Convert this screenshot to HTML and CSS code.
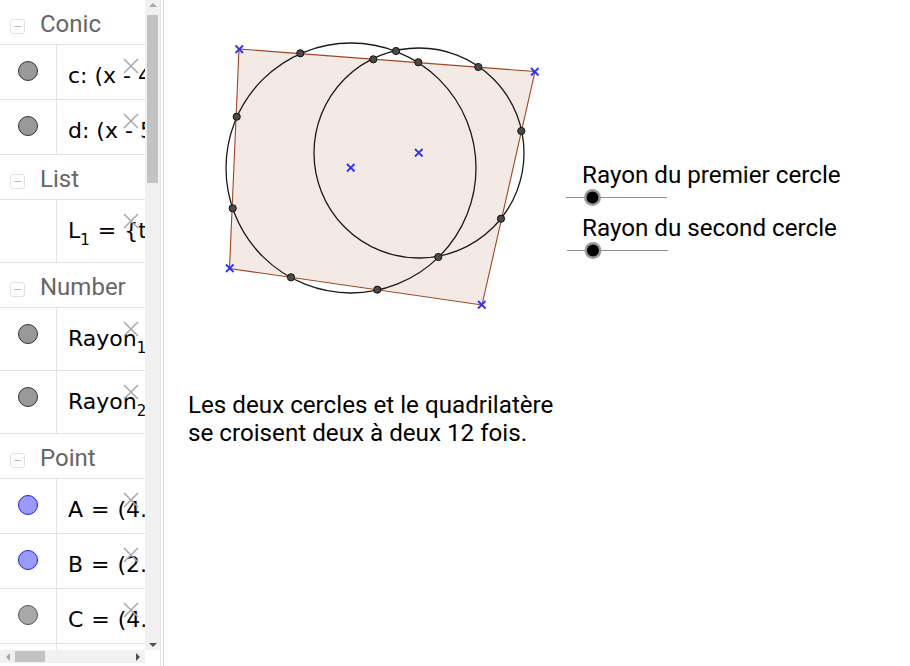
FILE: index.html
```html
<!DOCTYPE html>
<html lang="fr">
<head>
<meta charset="utf-8">
<title>Cercles et quadrilatère</title>
<link rel="stylesheet" href="styles.css">
</head>
<body>
<div class="app">
  <aside class="algebra">
    <div class="av-list">
      <div class="group-header"><span class="collapse"></span><span class="group-title">Conic</span></div>
      <div class="item">
        <div class="marker"><span class="dot gray"></span></div>
        <div class="formula">c: (x - 4.14)² + (y - 2.17)² = 6.25</div>
        <svg class="close" viewBox="0 0 16 16"><path d="M1 1L15 15M15 1L1 15"/></svg>
      </div>
      <div class="item">
        <div class="marker"><span class="dot gray"></span></div>
        <div class="formula">d: (x - 5.5)² + (y - 2.46)² = 4.41</div>
        <svg class="close" viewBox="0 0 16 16"><path d="M1 1L15 15M15 1L1 15"/></svg>
      </div>
      <div class="group-header"><span class="collapse"></span><span class="group-title">List</span></div>
      <div class="item tall">
        <div class="marker"></div>
        <div class="formula">L<sub>1</sub> <span class="op">=</span> {true, true}</div>
        <svg class="close" viewBox="0 0 16 16"><path d="M1 1L15 15M15 1L1 15"/></svg>
      </div>
      <div class="group-header"><span class="collapse"></span><span class="group-title">Number</span></div>
      <div class="item tall">
        <div class="marker"><span class="dot gray"></span></div>
        <div class="formula">Rayon<sub>1</sub> <span class="op">=</span> 2.5</div>
        <svg class="close" viewBox="0 0 16 16"><path d="M1 1L15 15M15 1L1 15"/></svg>
      </div>
      <div class="item tall">
        <div class="marker"><span class="dot gray"></span></div>
        <div class="formula">Rayon<sub>2</sub> <span class="op">=</span> 2.1</div>
        <svg class="close" viewBox="0 0 16 16"><path d="M1 1L15 15M15 1L1 15"/></svg>
      </div>
      <div class="group-header"><span class="collapse"></span><span class="group-title">Point</span></div>
      <div class="item">
        <div class="marker"><span class="dot blue"></span></div>
        <div class="formula">A <span class="op">=</span> (4.14, 2.17)</div>
        <svg class="close" viewBox="0 0 16 16"><path d="M1 1L15 15M15 1L1 15"/></svg>
      </div>
      <div class="item">
        <div class="marker"><span class="dot blue"></span></div>
        <div class="formula">B <span class="op">=</span> (2.84, 4.96)</div>
        <svg class="close" viewBox="0 0 16 16"><path d="M1 1L15 15M15 1L1 15"/></svg>
      </div>
      <div class="item">
        <div class="marker"><span class="dot light"></span></div>
        <div class="formula">C <span class="op">=</span> (4.5, 2.46)</div>
        <svg class="close" viewBox="0 0 16 16"><path d="M1 1L15 15M15 1L1 15"/></svg>
      </div>
      <div class="item">
        <div class="marker"><span class="dot light"></span></div>
        <div class="formula">D <span class="op">=</span> (8.8, 4.5)</div>
      </div>
    </div>
    <div class="vscroll">
      <span class="arrow up"></span>
      <div class="vthumb"></div>
      <div class="spacer"></div>
      <span class="arrow down"></span>
    </div>
    <div class="hscroll">
      <span class="harrow left"></span>
      <div class="hthumb"></div>
      <div class="spacer"></div>
      <span class="harrow right"></span>
    </div>
    <div class="corner"></div>
  </aside>
  <div class="divider"></div>
  <main class="graphics">
    <svg class="canvas" width="746" height="666" viewBox="164 0 746 666">
      <polygon class="quad" points="239,49 535,71.5 482,305 229.5,268.5"/>
      <circle class="conic" cx="351" cy="168" r="125"/>
      <circle class="conic" cx="419" cy="153" r="105"/>
      <g class="inter">
        <circle cx="300.3" cy="53.3" r="3.6"/>
        <circle cx="373.3" cy="59.3" r="3.6"/>
        <circle cx="396" cy="51" r="3.6"/>
        <circle cx="418.3" cy="62.3" r="3.6"/>
        <circle cx="478.3" cy="67" r="3.6"/>
        <circle cx="236.7" cy="116.7" r="3.6"/>
        <circle cx="521.3" cy="131" r="3.6"/>
        <circle cx="232.7" cy="208.3" r="3.6"/>
        <circle cx="501" cy="218.7" r="3.6"/>
        <circle cx="438.3" cy="257" r="3.6"/>
        <circle cx="291" cy="277.3" r="3.6"/>
        <circle cx="377.3" cy="289.7" r="3.6"/>
      </g>
      <g class="cross">
        <path d="M235.5 45.5l7.5 7.5M243 45.5l-7.5 7.5"/>
        <path d="M531 68l7.5 7.5M538.5 68l-7.5 7.5"/>
        <path d="M478 301l7.5 7.5M485.5 301l-7.5 7.5"/>
        <path d="M226 264.5l7.5 7.5M233.5 264.5l-7.5 7.5"/>
        <path d="M347 164l7.5 7.5M354.5 164l-7.5 7.5"/>
        <path d="M415 149l7.5 7.5M422.5 149l-7.5 7.5"/>
      </g>
      <g class="slider">
        <line x1="566" y1="197.5" x2="667" y2="197.5"/>
        <circle class="halo" cx="592.5" cy="197.5" r="8.5"/>
        <circle class="knob" cx="592.5" cy="197.5" r="6"/>
        <line x1="567" y1="250.5" x2="668" y2="250.5"/>
        <circle class="halo" cx="593" cy="250.5" r="8.5"/>
        <circle class="knob" cx="593" cy="250.5" r="6"/>
      </g>
    </svg>
    <div class="label label-1">Rayon du premier cercle</div>
    <div class="label label-2">Rayon du second cercle</div>
    <p class="caption">Les deux cercles et le quadrilatère<br>se croisent deux à deux 12 fois.</p>
  </main>
</div>
</body>
</html>
```
FILE: styles.css
```css
* { box-sizing: border-box; }

html, body {
  margin: 0;
  padding: 0;
  background: #fff;
}

body {
  width: 910px;
  height: 666px;
  overflow: hidden;
  font-family: "DejaVu Sans", sans-serif;
}

.app {
  display: flex;
  height: 666px;
}

/* ---------- Algebra view ---------- */
.algebra {
  width: 160px;
  flex: none;
  display: grid;
  grid-template-columns: 145px 15px;
  grid-template-rows: 650px 13px 3px;
}

.av-list {
  overflow: hidden;
  background: #fff;
}

.group-header {
  height: 45px;
  border-bottom: 1px solid #e3e3e3;
  display: flex;
  align-items: flex-start;
  padding: 10px 0 0 10px;
}

.collapse {
  width: 15px;
  height: 15px;
  margin-top: 9px;
  margin-right: 15px;
  border: 1px solid #e2e2e2;
  border-radius: 3px;
  display: flex;
  align-items: center;
  justify-content: center;
  flex: none;
}

.collapse::before {
  content: "";
  width: 7px;
  height: 1px;
  background: #b8b8b8;
}

.group-title {
  font-family: Roboto, sans-serif;
  font-size: 24px;
  line-height: 28px;
  color: #666;
  white-space: nowrap;
}

.item {
  position: relative;
  height: 55px;
  display: flex;
  border-bottom: 1px solid #e3e3e3;
}

.item.tall {
  height: 63px;
}

.marker {
  width: 57px;
  flex: none;
  border-right: 1px solid #e3e3e3;
  display: flex;
  justify-content: center;
  align-items: flex-start;
  padding-top: 16px;
  padding-right: 1px;
}

.dot {
  width: 20px;
  height: 20px;
  border-radius: 50%;
  border: 1px solid #333;
  background: #999;
}

.dot.blue {
  background: #9a9aff;
  border-color: #1d1dff;
}

.dot.light {
  background: #a9a9a9;
  border-color: #555;
}

.formula {
  padding: 18px 0 0 11px;
  font-family: "DejaVu Sans", sans-serif;
  font-size: 22px;
  line-height: 26px;
  color: #000;
  white-space: nowrap;
}

.formula .op {
  padding: 0 1px;
}

.formula sub {
  font-size: 15px;
  vertical-align: -7px;
  line-height: 0;
}

.close {
  position: absolute;
  left: 123px;
  top: 13px;
  width: 16px;
  height: 16px;
  fill: none;
  stroke: #aaa;
  stroke-width: 1.6;
}

/* scrollbars */
.vscroll {
  background: #f1f1f1;
  display: flex;
  flex-direction: column;
  align-items: center;
}

.arrow {
  width: 15px;
  height: 15px;
  flex: none;
  display: flex;
  align-items: center;
  justify-content: center;
}

.arrow::before {
  content: "";
  border-left: 4px solid transparent;
  border-right: 4px solid transparent;
}

.arrow.up::before {
  border-bottom: 4px solid #a8a8a8;
  margin-top: -6px;
}

.arrow.down {
  height: 14px;
}

.arrow.down::before {
  border-top: 4px solid #505050;
  margin-top: 4px;
}

.vthumb {
  width: 11px;
  height: 168px;
  background: #c3c3c3;
  flex: none;
}

.spacer {
  flex: 1;
}

.hscroll {
  background: #f1f1f1;
  display: flex;
  align-items: center;
}

.harrow {
  width: 15px;
  height: 13px;
  flex: none;
  display: flex;
  align-items: center;
  justify-content: center;
}

.harrow::before {
  content: "";
  border-top: 4px solid transparent;
  border-bottom: 4px solid transparent;
}

.harrow.left::before {
  border-right: 4px solid #a8a8a8;
}

.harrow.right::before {
  border-left: 4px solid #505050;
}

.hthumb {
  width: 30px;
  height: 11px;
  background: #c3c3c3;
  flex: none;
}

.corner {
  background: #fff;
}

.divider {
  width: 4px;
  flex: none;
  border-left: 1px solid #e6e6e6;
  border-right: 1px solid #d4d4d4;
}

/* ---------- Graphics view ---------- */
.graphics {
  position: relative;
  flex: 1;
  height: 666px;
  overflow: hidden;
}

.canvas {
  position: absolute;
  left: 0;
  top: 0;
}

.quad {
  fill: #f3eae6;
  stroke: #a0461e;
  stroke-width: 1.1;
}

.conic {
  fill: none;
  stroke: #1a1a1a;
  stroke-width: 1.3;
}

.inter circle {
  fill: #4a4a4a;
  stroke: #111;
  stroke-width: 1;
}

.cross path {
  fill: none;
  stroke: #3030ff;
  stroke-width: 1.8;
}

.slider line {
  stroke: #8c8c8c;
  stroke-width: 1;
}

.slider .halo {
  fill: #9a9a9a;
}

.slider .knob {
  fill: #000;
}

.label,
.caption {
  position: absolute;
  margin: 0;
  font-family: Roboto, sans-serif;
  font-size: 24.2px;
  line-height: 28px;
  color: #000;
  white-space: nowrap;
}

.label {
  left: 418px;
}

.label-1 { top: 161px; }
.label-2 { top: 214px; }

.caption {
  left: 24px;
  top: 391px;
}
```
